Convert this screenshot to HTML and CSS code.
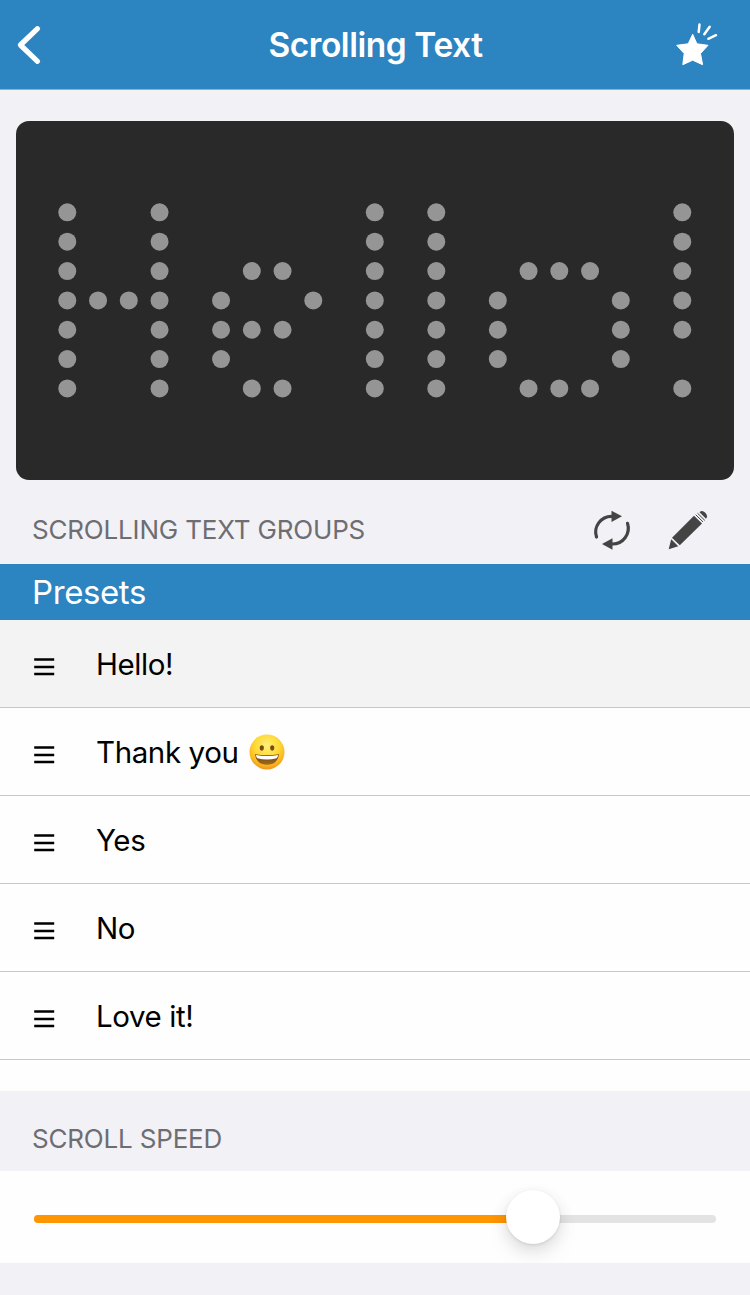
FILE: index.html
```
<!DOCTYPE html>
<html lang="en">
<head>
<meta charset="UTF-8">
<meta name="viewport" content="width=device-width, initial-scale=1.0">
<title>Scrolling Text</title>
<link rel="stylesheet" href="styles.css">
</head>
<body>
  <header class="navbar">
    <svg class="icon-back" viewBox="0 0 26 42" aria-label="Back">
      <path d="M21.5 4.7 L4.4 21 L21.5 37.3"/>
    </svg>
    <h1>Scrolling Text</h1>
    <svg class="icon-star" viewBox="0 0 44 44" aria-label="Favorites">
      <path class="star" d="M17.7 11.3 L21.9 20.8 L33 22.3 L25.5 30.6 L27.600 41.700 L17.700 37.200 L7.800 41.700 L9.200 30.600 L1.700 22.300 L13.200 20.800 Z"/>
      <path class="rays" d="M23.7 9 L24.5 1.500 M29.300 11.300 L34.700 3.700 M33.300 15.800 L41 12.200"/>
    </svg>
  </header>

  <div class="display">
    <svg id="dots" class="dots" viewBox="0 0 718 359"></svg>
  </div>

  <div class="section-title">
    <h2>SCROLLING TEXT GROUPS</h2>
    <svg class="icon-refresh" viewBox="0 0 40 40" aria-label="Refresh">
      <path class="arc" d="M4.500 27 A15.800 15.800 0 0 1 20 6.300"/>
      <path class="arc" d="M35.500 13.300 A15.800 15.800 0 0 1 20 34"/>
      <path d="M19.500 0.700 L30 6.300 L19.500 12 Z"/>
      <path d="M20.500 28.300 L10 34 L20.500 39.800 Z"/>
    </svg>
    <svg class="icon-pencil" viewBox="0 0 40 40" aria-label="Edit">
      <path d="M31.500 2.200 Q34 -0.300 37.300 2.700 Q40.300 6 38 8.700 Z"/>
      <path d="M26 5.800 L34 13.600 L11.800 35.300 L4 27.700 Z"/>
      <path d="M3.200 29.300 L10.300 36.200 L0.700 39.300 Z"/>
      <path class="band" d="M27.700 4.700 L35 11.900 M29.500 3.200 L36.800 10.400"/>
    </svg>
  </div>

  <svg class="defs">
    <symbol id="handle" viewBox="0 0 21 18">
      <path d="M0.200 1.500 H20.200 M0.200 9 H20.200 M0.200 16 H20.200" stroke="#000" stroke-width="2.700"/>
    </symbol>
  </svg>

  <div class="group-name">Presets</div>
  <ul class="messages">
    <li class="selected"><svg class="handle"><use href="#handle"/></svg>Hello!</li>
    <li><svg class="handle"><use href="#handle"/></svg>Thank you
      <svg class="emoji" viewBox="0 0 36 36" role="img" aria-label="grinning face">
        <defs>
          <radialGradient id="face" cx="50%" cy="32%" r="70%">
            <stop offset="0" stop-color="#fff07a"/>
            <stop offset="0.5" stop-color="#ffd935"/>
            <stop offset="0.8" stop-color="#fbb41f"/>
            <stop offset="1" stop-color="#ee8f1c"/>
          </radialGradient>
          <linearGradient id="mouth" x1="0" y1="0" x2="0" y2="1">
            <stop offset="0" stop-color="#6b4010"/>
            <stop offset="1" stop-color="#a06d1a"/>
          </linearGradient>
        </defs>
        <circle cx="18" cy="18" r="17.500" fill="url(#face)"/>
        <ellipse cx="12.800" cy="14" rx="2.100" ry="2.700" fill="#7a4a12"/>
        <ellipse cx="23.200" cy="14" rx="2.100" ry="2.700" fill="#7a4a12"/>
        <path d="M6 20.300 Q18 22.300 30 20.300 Q28.500 30.800 18 30.800 Q7.500 30.800 6 20.300 Z" fill="url(#mouth)"/>
        <path d="M6.800 20.900 Q18 22.900 29.200 20.900 Q28.800 23 27.600 24.200 Q18 27 8.400 24.200 Q7.200 23 6.800 20.900 Z" fill="#fff"/>
      </svg>
    </li>
    <li><svg class="handle"><use href="#handle"/></svg>Yes</li>
    <li><svg class="handle"><use href="#handle"/></svg>No</li>
    <li><svg class="handle"><use href="#handle"/></svg>Love it!</li>
  </ul>

  <div class="section-title speed">
    <h2>SCROLL SPEED</h2>
  </div>
  <div class="slider">
    <div class="track">
      <div class="fill"></div>
      <div class="thumb"></div>
    </div>
  </div>

<script>
  const rows = [
    '#..#......#.#.......#',
    '#..#......#.#.......#',
    '#..#..##..#.#..###..#',
    '####.#..#.#.#.#...#.#',
    '#..#.###..#.#.#...#.#',
    '#..#.#....#.#.#...#..',
    '#..#..##..#.#..###..#'
  ];
  const dots = document.getElementById('dots');

  rows.forEach((row, y) => {
    [...row].forEach((cell, x) => {
      if (cell !== '#') return;
      const dot = document.createElementNS('http://www.w3.org/2000/svg', 'circle');
      dot.setAttribute('cx', 51.3 + x * 30.75);
      dot.setAttribute('cy', 91.3 + y * 29.36);
      dot.setAttribute('r', 9);
      dots.appendChild(dot);
    });
  });
</script>
</body>
</html>
```
FILE: styles.css
```
* {
  box-sizing: border-box;
  margin: 0;
  padding: 0;
}

body {
  font-family: Inter, "Liberation Sans", sans-serif;
  background-color: #f2f1f6;
  color: #000;
}

.navbar {
  display: flex;
  align-items: center;
  justify-content: space-between;
  height: 90px;
  padding: 0 31px 0 16px;
  background-color: #2c84c1;
  border-bottom: 1px solid #a5abb3;
}

.navbar h1 {
  padding-top: 1px;
  color: #fff;
  font-size: 33.5px;
  font-weight: 600;
  letter-spacing: -0.45px;
}

.icon-back {
  width: 26px;
  height: 42px;
  margin-right: 34px;
  fill: none;
  stroke: #fff;
  stroke-width: 5.2;
  stroke-linecap: round;
  stroke-linejoin: round;
}

.icon-star {
  width: 44px;
  height: 44px;
}

.star {
  fill: #fff;
  stroke: #fff;
  stroke-linejoin: round;
}

.rays {
  stroke: #fff;
  stroke-width: 2.5;
  stroke-linecap: round;
}

.display {
  height: 359px;
  margin: 31px 16px 0;
  background-color: #292929;
  border-radius: 13px;
}

.dots {
  display: block;
  width: 718px;
  height: 359px;
  fill: #959595;
}

.section-title {
  display: flex;
  align-items: center;
  height: 84px;
  padding: 16px 42px 0 32px;
}

.section-title h2 {
  flex: 1;
  padding-bottom: 2px;
  color: #6d6d72;
  font-size: 26px;
  font-weight: 400;
  letter-spacing: -0.18px;
}

.icon-refresh,
.icon-pencil {
  width: 40px;
  height: 40px;
  fill: #444;
}

.icon-refresh {
  margin-right: 36px;
}

.arc {
  fill: none;
  stroke: #444;
  stroke-width: 3.2;
  stroke-linecap: round;
}

.band {
  stroke: #444;
  stroke-width: 1;
}

.defs {
  display: none;
}

.group-name {
  height: 56px;
  padding-left: 32px;
  background-color: #2c84c1;
  color: #fff;
  font-size: 33px;
  letter-spacing: -0.4px;
  line-height: 57px;
}

.messages {
  height: 471px;
  background-color: #fefefe;
  list-style: none;
}

.messages li {
  display: flex;
  align-items: center;
  height: 88px;
  padding: 1px 32px 0 34px;
  border-bottom: 1px solid #c8c7cc;
  font-size: 29.5px;
  letter-spacing: -0.4px;
}

.messages .selected {
  background-color: #f3f3f3;
}

.handle {
  width: 21px;
  height: 18px;
  margin: 6px 41px 0 0;
}

.emoji {
  width: 36px;
  height: 36px;
  margin-left: 10px;
}

.speed {
  height: 80px;
}

.slider {
  height: 92px;
  padding: 44px 34px 0;
  background-color: #fefefe;
}

.track {
  position: relative;
  height: 8px;
  background-color: #e3e3e3;
  border-radius: 4px;
}

.fill {
  width: 499px;
  height: 8px;
  background-color: #ff9500;
  border-radius: 4px;
}

.thumb {
  position: absolute;
  top: -25px;
  left: 472px;
  width: 54px;
  height: 54px;
  background-color: #fff;
  border-radius: 50%;
  box-shadow: 0 6px 16px rgba(0, 0, 0, 0.12), 0 1px 3px rgba(0, 0, 0, 0.1), 0 12px 30px rgba(0, 0, 0, 0.04);
}
```
